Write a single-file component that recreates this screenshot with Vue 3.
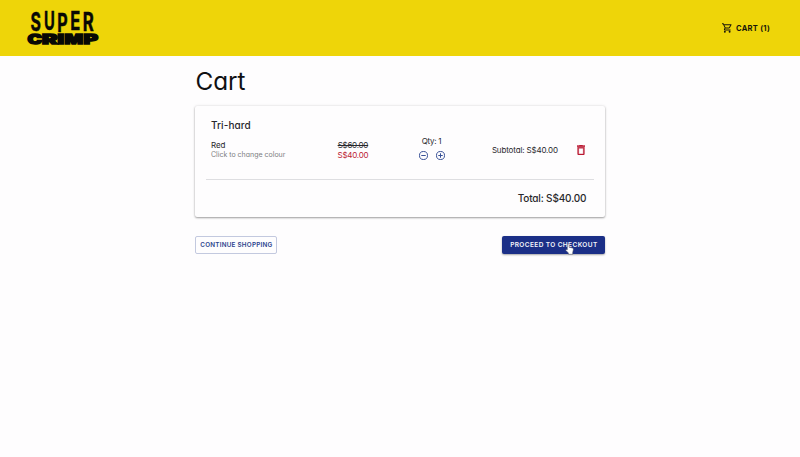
<script setup>
import { ref, computed } from 'vue'

const price = 40
const qty = ref(1)
const money = (n) => `S$${n.toFixed(2)}`
const subtotal = computed(() => money(price * qty.value))

const topLetters = [
  { ch: 'S', x: 30.6, y: 31.3, w: 10.4 },
  { ch: 'U', x: 44, y: 29.8, w: 10.8 },
  { ch: 'P', x: 57.2, y: 32.2, w: 10.4 },
  { ch: 'E', x: 70.2, y: 29.6, w: 10 },
  { ch: 'R', x: 82.800, y: 31.3, w: 11 },
]
const bottomLetters = [
  { ch: 'C', x: 27.6, w: 14.5 },
  { ch: 'R', x: 42.1, w: 15.5 },
  { ch: 'I', x: 57.4, w: 6.5 },
  { ch: 'M', x: 64.4, w: 18.5 },
  { ch: 'P', x: 83.4, w: 14.5 },
]
</script>

<template>
  <div class="page">
    <header class="bar">
      <svg class="logo" width="110" height="56" viewBox="0 0 110 56" aria-label="Super Crimp">
        <text v-for="l in topLetters" :key="l.ch" class="top" :x="l.x" :y="l.y" :textLength="l.w" lengthAdjust="spacingAndGlyphs">{{ l.ch }}</text>
        <text v-for="l in bottomLetters" :key="l.ch" class="bottom" :x="l.x" y="44.2" :textLength="l.w" lengthAdjust="spacingAndGlyphs">{{ l.ch }}</text>
      </svg>
      <a class="cart-link">
        <svg width="10" height="10" viewBox="1 2 21 20" fill="currentColor">
          <path d="M15.55 13c.75 0 1.41-.41 1.75-1.03l3.58-6.49A1 1 0 0 0 20.01 4H5.21l-.94-2H1v2h2l3.6 7.59-1.35 2.44C4.52 15.37 5.48 17 7 17h12v-2H7l1.1-2h7.45zM6.16 6h12.15l-2.76 5H8.53L6.16 6zM7 18a2 2 0 1 0 0 4 2 2 0 0 0 0-4zm10 0a2 2 0 1 0 0 4 2 2 0 0 0 0-4z" />
        </svg>
        <span class="cart-label">CART ({{ qty }})</span>
      </a>
    </header>

    <main class="content">
      <h1>Cart</h1>
      <section class="card">
        <h2>Tri-hard</h2>
        <div class="row">
          <div class="variant">
            <div class="colour">Red</div>
            <div class="hint">Click to change colour</div>
          </div>
          <div class="prices">
            <s>S$60.00</s>
            <div class="sale">{{ money(price) }}</div>
          </div>
          <div class="quantity">
            <div class="qty">Qty: {{ qty }}</div>
            <div class="steppers">
              <svg width="9" height="9" viewBox="2 2 20 20" fill="none" stroke="currentColor" stroke-width="2.2"><circle cx="12" cy="12" r="8.9" /><path d="M7 12h10" /></svg>
              <svg width="9" height="9" viewBox="2 2 20 20" fill="none" stroke="currentColor" stroke-width="2.2"><circle cx="12" cy="12" r="8.9" /><path d="M7 12h10M12 7v10" /></svg>
            </div>
          </div>
          <div class="subtotal">Subtotal: {{ subtotal }}</div>
          <svg class="trash" width="8" height="10" viewBox="5 3 14 18" preserveAspectRatio="none" fill="currentColor" stroke="currentColor" stroke-width=".6">
            <path d="M6 19c0 1.1.9 2 2 2h8c1.100 0 2-.9 2-2V7H6v12zM8 9h8v10H8V9zm7.500-5l-1-1h-5l-1 1H5v2h14V4z" />
          </svg>
        </div>
        <hr />
        <div class="total">Total: {{ subtotal }}</div>
      </section>
      <div class="actions">
        <button class="outlined"><span>CONTINUE SHOPPING</span></button>
        <button class="filled">
          <span>PROCEED TO CHECKOUT</span>
          <svg class="pointer" width="9" height="12" viewBox="0 0 9 12">
            <path d="M2.300 6.700V1.500Q3.200.1 4.100 1.500V4.200L7.500 5Q8.500 5.300 8.400 6.500L7.700 9.500V11.300H3.400V10L.7 7.200Q.8 5.900 2.300 6.700Z" fill="#fff" stroke="#45485c" stroke-width=".5" />
          </svg>
        </button>
      </div>
    </main>
  </div>
</template>

<style>
body {
  background: #fefdfe;
}
</style>

<style scoped>
.page {
  min-height: 457px;
  font-family: Inter, "Open Sans", sans-serif;
  font-feature-settings: "cv11";
  color: #28282c;
}
.bar {
  height: 56px;
  box-sizing: border-box;
  padding-right: 30px;
  display: flex;
  align-items: center;
  justify-content: space-between;
  background: #eed509;
  color: #17150a;
}
.logo text {
  font-family: Inter, sans-serif;
  fill: #080804;
}
.logo .top {
  font-size: 25px;
  font-weight: 700;
  stroke: #080804;
  stroke-width: 0.5px;
}
.logo .bottom {
  font-size: 13px;
  font-weight: 900;
  stroke: #080804;
  stroke-width: 1.300px;
}
.cart-link {
  display: flex;
  align-items: center;
  gap: 4px;
}
.cart-label {
  width: 34px;
  font-size: 7.500px;
  font-weight: 700;
  letter-spacing: 0.300px;
  white-space: nowrap;
}
.content {
  width: 410px;
  margin: 0 auto;
  padding-left: 0.8px;
}
h1 {
  margin: 0;
  padding-top: 8px;
  height: 42px;
  line-height: 34px;
  font-size: 24.300px;
  font-weight: 400;
  color: #101012;
}
.card {
  height: 111px;
  box-sizing: border-box;
  padding: 13px 11px 0;
  border-radius: 2px;
  background: #fefdfe;
  box-shadow: 0 1px 2px rgba(0, 0, 0, 0.34), 0 0 3px rgba(0, 0, 0, 0.12);
}
h2 {
  margin: 0 0 0 4.500px;
  line-height: 13px;
  font-size: 10px;
  font-weight: 500;
  letter-spacing: 0.1px;
}
.row {
  display: grid;
  grid-template-columns: 110px 64px 93px 99px 8px;
  align-items: center;
  height: 36px;
  padding-left: 4.500px;
  font-size: 8px;
  line-height: 10px;
}
.hint {
  font-size: 7px;
  color: #7d7d82;
}
.prices,
.quantity {
  text-align: center;
}
.prices {
  letter-spacing: -0.25px;
}
.subtotal {
  padding-left: 14px;
  letter-spacing: -0.15px;
  white-space: nowrap;
}
.qty {
  letter-spacing: -0.3px;
  transform: translateY(-5px);
}
.sale,
.trash {
  color: #bb1a34;
}
.steppers {
  display: flex;
  justify-content: center;
  gap: 8px;
  padding-left: 1px;
  color: #374f96;
}
hr {
  margin: 11px 0 0;
  border: 0;
  height: 1px;
  background: #dedee1;
}
.total {
  padding: 11px 8px 0 0;
  text-align: right;
  line-height: 14px;
  font-size: 10px;
  font-weight: 500;
  letter-spacing: -0.15px;
}
.actions {
  display: flex;
  justify-content: space-between;
  padding-top: 19px;
}
button {
  box-sizing: border-box;
  height: 18px;
  padding: 0;
  border-radius: 2px;
  font: 600 6.500px Inter, sans-serif;
  letter-spacing: 0.4px;
  white-space: nowrap;
  display: flex;
  align-items: center;
  justify-content: center;
}
.outlined {
  width: 82px;
  border: 1px solid #c3c9df;
  background: transparent;
  color: #2b438d;
  font-size: 6.300px;
  letter-spacing: 0.25px;
}
.filled {
  position: relative;
  width: 103px;
  border: 0;
  background: #1b2f87;
  color: #f4f5fb;
  box-shadow: 0 1px 2px rgba(0, 0, 0, 0.35);
}
.pointer {
  position: absolute;
  left: 63px;
  top: 7px;
}
</style>
